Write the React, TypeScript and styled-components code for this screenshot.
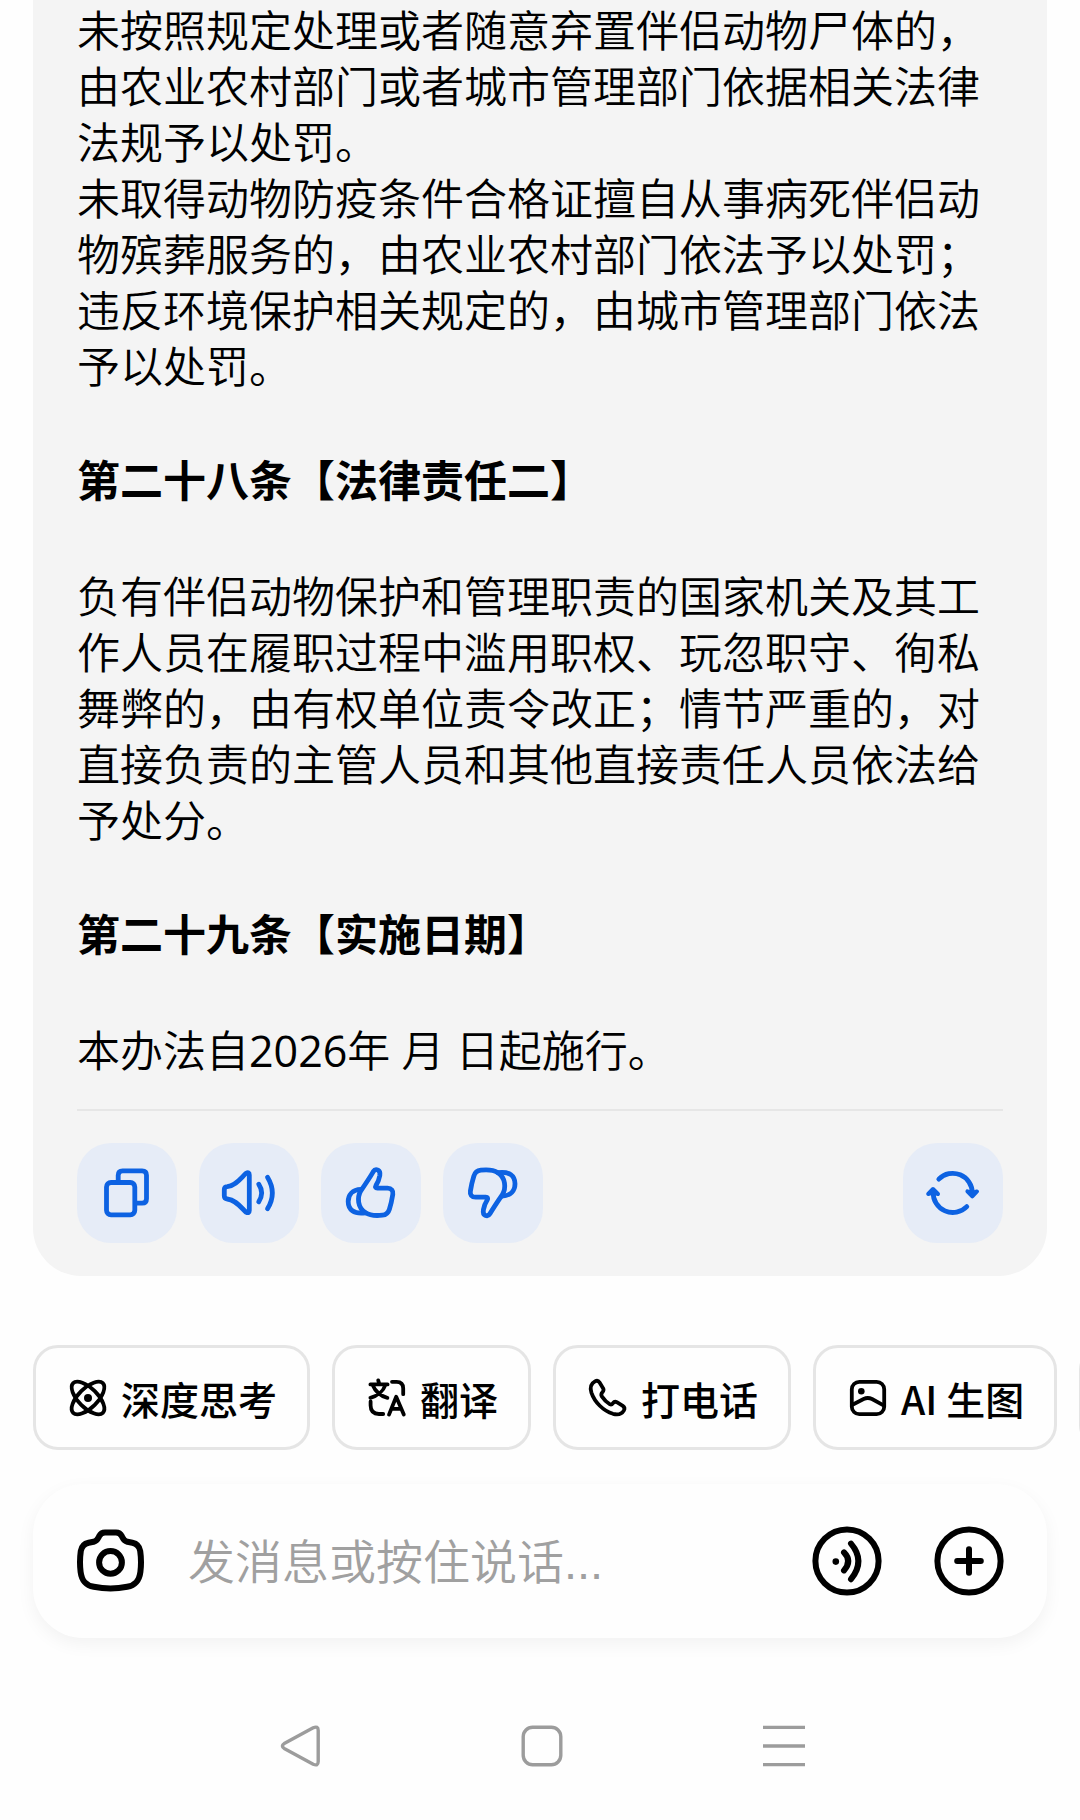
import React from "react";
import styled, { createGlobalStyle } from "styled-components";

const GlobalStyle = createGlobalStyle`
  *, *::before, *::after { box-sizing: border-box; }
  body {
    margin: 0;
    background: #fefefe;
    color: #000;
    font-family: "Open Sans", "Noto Sans CJK SC", sans-serif;
  }
  button, input { font: inherit; color: inherit; }
  h2, p { margin: 0; }
`;

const Page = styled.div`
  display: flex;
  flex-direction: column;
  min-height: 100vh;
  overflow-x: hidden;
`;

const MessageCard = styled.article`
  margin: 0 33px;
  padding: 3px 44px 33px;
  background: #f4f4f4;
  border-radius: 0 0 48px 48px;
`;

const Paragraph = styled.p`
  font-size: 43px;
  font-weight: 350;
  line-height: 56px;
`;

const Year = styled.span`
  font-weight: 400;
`;

const Heading = styled.h2`
  margin: 58px 0 60px;
  font-size: 43px;
  line-height: 56px;
  font-weight: 700;
`;

const Actions = styled.div`
  display: flex;
  gap: 22px;
  margin-top: 30px;
  padding-top: 32px;
  border-top: 2px solid #e6e6e6;
`;

const ActionButton = styled.button<{ $end?: boolean }>`
  flex: none;
  width: 100px;
  height: 100px;
  margin: 0;
  margin-left: ${(p) => (p.$end ? "auto" : "0")};
  padding: 0;
  border: 0;
  border-radius: 34px;
  background: #e6ecf7;
  color: #0d62e2;
  cursor: pointer;
`;

const ActionSvg = styled.svg`
  display: block;
  fill: none;
  stroke: currentColor;
  stroke-width: 4.8;
  stroke-linecap: round;
  stroke-linejoin: round;
`;

const ChipRow = styled.div`
  display: flex;
  gap: 22px;
  margin-top: 69px;
  padding-left: 33px;
  overflow: hidden;
`;

const Chip = styled.button`
  flex: none;
  display: flex;
  align-items: center;
  gap: 11px;
  height: 105px;
  min-width: 190px;
  padding: 0 30px;
  border: 3px solid #e5e5e5;
  border-radius: 25px;
  background: #fefefe;
  font-family: "Noto Sans CJK SC", sans-serif;
  font-size: 39px;
  font-weight: 500;
  line-height: 56px;
  white-space: nowrap;
  cursor: pointer;
`;

const ChipSvg = styled.svg`
  flex: none;
  fill: none;
  stroke: currentColor;
  stroke-width: 3.8;
  stroke-linecap: round;
  stroke-linejoin: round;
`;

const Composer = styled.form`
  display: flex;
  align-items: center;
  gap: 43px;
  height: 154px;
  margin: 34px 33px 0;
  padding: 0 43px 0 44px;
  border-radius: 50px;
  background: #fefefe;
  box-shadow: 0 6px 18px rgba(0, 0, 0, 0.05);
`;

const MessageInput = styled.input`
  flex: 1;
  min-width: 0;
  height: 70px;
  padding: 2px 0 0;
  border: 0;
  outline: 0;
  background: transparent;
  font-family: "Liberation Sans", "Noto Sans CJK SC", sans-serif;
  font-size: 47px;
  font-weight: 350;
  &::placeholder { color: #a0a0a0; opacity: 1; }
`;

const ComposerTools = styled.div`
  display: flex;
  gap: 52px;
`;

const PlainButton = styled.button`
  display: block;
  flex: none;
  padding: 0;
  border: 0;
  background: transparent;
  cursor: pointer;
`;

const ToolSvg = styled.svg`
  display: block;
  fill: none;
  stroke: currentColor;
  stroke-width: 6;
  stroke-linecap: round;
  stroke-linejoin: round;
`;

const SystemNav = styled.nav`
  display: flex;
  justify-content: center;
  gap: 200px;
  padding: 87px 0 53px 4px;
`;

const NavSvg = styled.svg`
  display: block;
  fill: none;
  stroke: #9c9c9c;
  stroke-width: 3.4;
  stroke-linejoin: round;
`;

const THUMB = (
  <>
    <path d="M52.3 28.6C53.5 26.6 55.3 26.3 57 27.1C58.8 28 59.2 30.2 58.8 32.6C58 36.6 56.6 40 55 42.4C54 44.2 54.6 45.2 56.4 45.2H66.5C70.6 45.2 72.4 47.8 71.8 51.4C71 56.4 69.8 61.8 68.4 66.2C67.2 70.2 65 71.8 61.4 72.2C55 72.9 48.6 72.4 44.6 69.8C36.4 64.6 36 54.4 39.8 47.8C43.8 42 48.2 35.6 52.3 28.6Z" />
    <path d="M40 46.4C31.4 46.6 27.2 52 27.2 58.6C27.2 66.6 32.6 71.4 44.4 69.8" />
  </>
);

function CopyIcon() {
  return (
    <ActionSvg width="100" height="100" viewBox="0 0 100 100" aria-hidden="true">
      <rect x="29.5" y="39.5" width="28.3" height="32.3" rx="4.5" />
      <path d="M41.2 39V32.3Q41.2 27.9 45.6 27.9H65.1Q69.5 27.9 69.5 32.3V55.7Q69.5 60.1 65.1 60.1H58.5" />
    </ActionSvg>
  );
}

function SpeakerIcon() {
  return (
    <ActionSvg width="100" height="100" viewBox="0 0 100 100" aria-hidden="true">
      <path d="M25.3 46.8Q25.3 43.8 28.2 43.6C36.8 42.8 42.2 34.6 47 30.3Q50.3 28.6 50.3 32V67.4Q50.3 70.8 47 69.1C42.2 64.8 36.8 56.8 28.2 56Q25.3 55.8 25.3 52.8Z" />
      <path d="M59.7 41.2Q65.6 50 59.7 58.8M68.5 34.2Q78.2 50 68.5 65.8" />
    </ActionSvg>
  );
}

function ThumbIcon({ down }: { down?: boolean }) {
  return (
    <ActionSvg width="100" height="100" viewBox="0 0 100 100" aria-hidden="true">
      <g transform={down ? "rotate(180 49.6 49.7)" : undefined}>{THUMB}</g>
    </ActionSvg>
  );
}

function RefreshIcon() {
  return (
    <ActionSvg width="100" height="100" viewBox="0 0 100 100" aria-hidden="true">
      <path d="M35.8 36.1A19.6 19.6 0 0 1 69.3 50M63.8 63.6A19.6 19.6 0 0 1 30.2 49" />
      <path fill="currentColor" strokeWidth="4" d="M64.4 48.4L69.3 53.4L74 48.4L69.3 50ZM25.2 51L30 46L35 51L30.2 49.4Z" />
    </ActionSvg>
  );
}

function AtomIcon() {
  return (
    <ChipSvg width="44" height="44" viewBox="0 0 44 44" aria-hidden="true">
      <ellipse cx="22" cy="22" rx="21" ry="9.6" transform="rotate(45 22 22)" />
      <ellipse cx="22" cy="22" rx="21" ry="9.6" transform="rotate(-45 22 22)" />
      <circle cx="22" cy="22" r="4" fill="currentColor" stroke="none" />
    </ChipSvg>
  );
}

function TranslateIcon() {
  return (
    <ChipSvg width="44" height="44" viewBox="0 0 44 44" aria-hidden="true">
      <path d="M5.4 8.4H22.6M13.2 4.4L14.4 8M20.4 9C18.4 14.8 12.6 20 5.4 21.8M7.8 9.4C10 15 16 20.6 22.4 21.8" />
      <path d="M27 5.8H31.6Q38.2 5.8 38.2 12.4V18.2M5.6 25.4V29.6Q5.6 38 14 38H18.2" />
      <path d="M24 38.6L31.2 20.8L38.8 38.6M26.6 32.8H36.4" />
    </ChipSvg>
  );
}

function PhoneIcon() {
  return (
    <ChipSvg width="44" height="44" viewBox="0 0 44 44" aria-hidden="true">
      <path d="M9 5.4C11 4.3 12.6 5 13.6 6.6L17.2 12.4C18 14 17.6 14.8 16.6 16C15 17.6 14.8 18.6 15.8 20.4C18.2 24 20.6 26.4 24 28.4C25.2 29 26 28.6 27 27.2C28 25.8 29.2 25.4 30.8 26.2L36.8 29.8C38.6 31 38.8 32.8 37.8 34.6C35.8 38 31.6 39 27 37.8C17.4 35 8.6 26.2 5.4 16.6C4 12 5 7.6 9 5.4Z" />
    </ChipSvg>
  );
}

function PictureIcon() {
  return (
    <ChipSvg width="44" height="44" viewBox="0 0 44 44" aria-hidden="true">
      <rect x="5.8" y="5.8" width="32.4" height="32.4" rx="7.5" />
      <circle cx="15.3" cy="15.3" r="3.3" fill="currentColor" stroke="none" />
      <path d="M6 29L17.6 23Q21.8 21 26 23L38 29.6" />
    </ChipSvg>
  );
}

function CameraIcon() {
  return (
    <ToolSvg width="68" height="68" viewBox="0 0 68 68" aria-hidden="true">
      <path d="M28 5.6H39C42 5.6 43.6 6.8 44.8 9.2C46.4 12.4 46.8 13.8 50.4 14.8L55.4 15.8C60 16.8 62.4 19.4 63.2 24C64.2 31 64.2 38.4 63.4 44.8C62.2 54 58.2 58.2 50.2 59.8C39.8 62 27.2 62 16.8 59.8C8.8 58.2 4.8 54 3.6 44.8C2.8 38.4 2.8 31 3.8 24C4.6 19.4 7 16.8 11.6 15.8L16.6 14.8C20.2 13.8 20.6 12.4 22.2 9.2C23.4 6.8 25 5.6 28 5.6Z" />
      <circle cx="33.5" cy="35.4" r="11.4" />
    </ToolSvg>
  );
}

function VoiceIcon() {
  return (
    <ToolSvg width="70" height="70" viewBox="0 0 70 70" aria-hidden="true">
      <circle cx="35" cy="35" r="31.6" />
      <circle cx="23.8" cy="35.6" r="3.3" fill="currentColor" stroke="none" />
      <path d="M32 26.4Q40.4 35 32 44.4M39 17.6Q53.8 35 39 53.2" />
    </ToolSvg>
  );
}

function PlusIcon() {
  return (
    <ToolSvg width="70" height="70" viewBox="0 0 70 70" aria-hidden="true">
      <circle cx="35" cy="35" r="31.6" />
      <path d="M35 23.2V46.8M23.2 35H46.8" />
    </ToolSvg>
  );
}

const chips = [
  { label: "深度思考", icon: <AtomIcon /> },
  { label: "翻译", icon: <TranslateIcon /> },
  { label: "打电话", icon: <PhoneIcon /> },
  { label: "AI 生图", icon: <PictureIcon /> },
];

export default function App() {
  return (
    <Page lang="zh-CN">
      <GlobalStyle />
      <MessageCard>
        <Paragraph>未按照规定处理或者随意弃置伴侣动物尸体的，由农业农村部门或者城市管理部门依据相关法律法规予以处罚。</Paragraph>
        <Paragraph>未取得动物防疫条件合格证擅自从事病死伴侣动物殡葬服务的，由农业农村部门依法予以处罚；违反环境保护相关规定的，由城市管理部门依法予以处罚。</Paragraph>
        <Heading>第二十八条【法律责任二】</Heading>
        <Paragraph>负有伴侣动物保护和管理职责的国家机关及其工作人员在履职过程中滥用职权、玩忽职守、徇私舞弊的，由有权单位责令改正；情节严重的，对直接负责的主管人员和其他直接责任人员依法给予处分。</Paragraph>
        <Heading>第二十九条【实施日期】</Heading>
        <Paragraph>本办法自<Year>2026</Year>年 月 日起施行。</Paragraph>
        <Actions>
          <ActionButton type="button" aria-label="复制"><CopyIcon /></ActionButton>
          <ActionButton type="button" aria-label="朗读"><SpeakerIcon /></ActionButton>
          <ActionButton type="button" aria-label="喜欢"><ThumbIcon /></ActionButton>
          <ActionButton type="button" aria-label="不喜欢"><ThumbIcon down /></ActionButton>
          <ActionButton type="button" aria-label="重新生成" $end><RefreshIcon /></ActionButton>
        </Actions>
      </MessageCard>

      <ChipRow>
        {chips.map((chip) => (
          <Chip key={chip.label} type="button">
            {chip.icon}
            {chip.label}
          </Chip>
        ))}
        <Chip type="button" aria-label="更多" />
      </ChipRow>

      <Composer onSubmit={(event) => event.preventDefault()}>
        <PlainButton type="button" aria-label="拍照"><CameraIcon /></PlainButton>
        <MessageInput type="text" aria-label="消息" placeholder="发消息或按住说话..." />
        <ComposerTools>
          <PlainButton type="button" aria-label="语音"><VoiceIcon /></PlainButton>
          <PlainButton type="button" aria-label="添加"><PlusIcon /></PlainButton>
        </ComposerTools>
      </Composer>

      <SystemNav aria-label="系统导航">
        <PlainButton type="button" aria-label="返回">
          <NavSvg width="42" height="42" viewBox="0 0 42 42" aria-hidden="true">
            <path d="M34.2 2.8Q39.2 .6 39.2 5.4V36.6Q39.2 41.4 34.2 39.2L5.2 23.4Q1.6 21 5.2 18.6Z" />
          </NavSvg>
        </PlainButton>
        <PlainButton type="button" aria-label="主页">
          <NavSvg width="42" height="42" viewBox="0 0 42 42" aria-hidden="true">
            <rect x="2.2" y="2.2" width="37.6" height="37.6" rx="9.5" />
          </NavSvg>
        </PlainButton>
        <PlainButton type="button" aria-label="最近任务">
          <NavSvg width="42" height="42" viewBox="0 0 42 42" aria-hidden="true">
            <path d="M0 2.4H42M0 21H42M0 39.6H42" />
          </NavSvg>
        </PlainButton>
      </SystemNav>
    </Page>
  );
}
